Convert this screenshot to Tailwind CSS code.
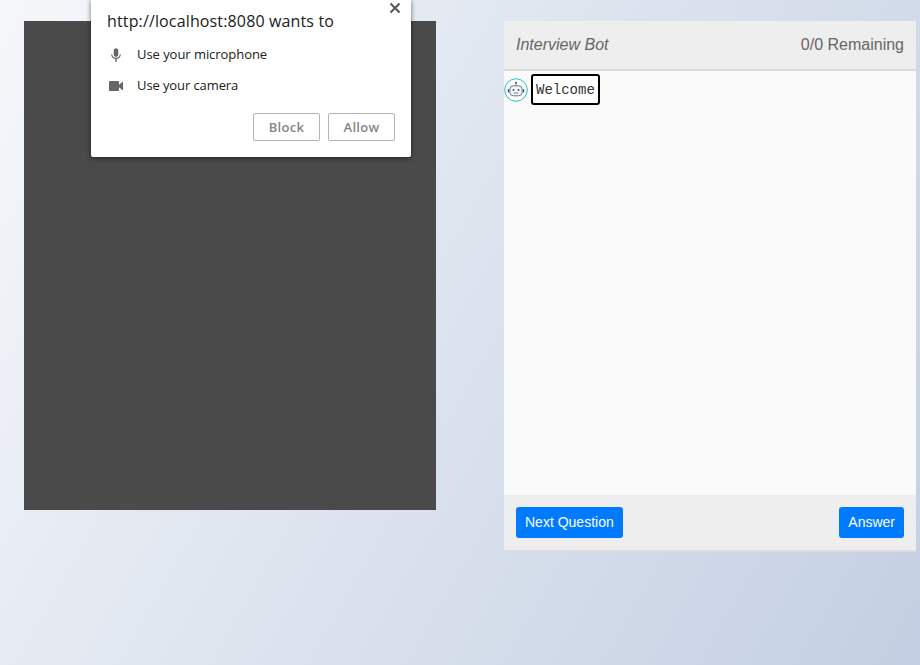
<!DOCTYPE html>
<html lang="en">
<head>
    <meta charset="UTF-8">
    <meta name="viewport" content="width=device-width, initial-scale=1.0">
    <title>Interview Bot</title>
    <script src="https://cdn.jsdelivr.net/npm/@tailwindcss/browser@4"></script>
</head>
<body class="h-[665px] overflow-hidden bg-[linear-gradient(120deg,#f5f7fa,#c3cfe2)] font-['Liberation_Sans',sans-serif]">
    <main class="flex items-start pt-[21px] pl-[24px]">
        <div class="w-[412px] h-[489px] bg-[#4a4a4a]"></div>

        <section class="ml-[68px] w-[412px] h-[531px] flex flex-col bg-[#fafafa] border-b-2 border-[#dddddd]">
            <header class="h-[50px] flex items-center justify-between px-3 bg-[#eeeeee] border-b-2 border-[#dddddd] text-[#666666] text-base">
                <span class="italic">Interview Bot</span>
                <span>0/0 Remaining</span>
            </header>
            <div class="flex-1 flex items-start pt-[3px]">
                <svg class="w-[24px] h-[24px] mt-[4px]" viewBox="0 0 24 24" fill="none">
                    <circle cx="12" cy="12" r="11.250" fill="#ffffff" stroke="#2bbcc4" stroke-width="1"/>
                    <circle cx="12" cy="4.800" r="1.100" fill="#4a5b6c"/>
                    <path d="M12 5.800v2" stroke="#4a5b6c" stroke-width="0.800"/>
                    <rect x="5.800" y="7.800" width="12.400" height="10" rx="3.500" fill="#eef4f8" stroke="#4a5b6c" stroke-width="0.800"/>
                    <rect x="3.800" y="11" width="1.400" height="3.600" rx="0.600" fill="#4a5b6c"/>
                    <rect x="18.800" y="11" width="1.400" height="3.600" rx="0.600" fill="#4a5b6c"/>
                    <circle cx="9.500" cy="12" r="0.900" fill="#3c4f63"/>
                    <circle cx="14.500" cy="12" r="0.900" fill="#3c4f63"/>
                    <path d="M9.800 15h4.400" stroke="#4a5b6c" stroke-width="0.800"/>
                </svg>
                <div class="ml-[3px] px-[3px] h-[31px] flex items-center bg-white border-2 border-black rounded-[3px] font-['Liberation_Mono',monospace] text-sm text-[#333333]">Welcome</div>
            </div>
            <footer class="h-[55px] flex items-center justify-between px-3 bg-[#eeeeee]">
                <button class="h-[31px] px-[9px] pb-px bg-[#007bff] text-white text-sm rounded-[3px]">Next Question</button>
                <button class="h-[31px] px-[9px] pb-px bg-[#007bff] text-white text-sm rounded-[3px]">Answer</button>
            </footer>
        </section>
    </main>

    <!-- browser permission prompt -->
    <div class="absolute left-[91px] top-0 w-[320px] h-[157px] bg-white rounded-b-[2px] shadow-[0_1px_5px_rgba(0,0,0,0.55)] font-['Open_Sans',sans-serif] text-[#212121]">
        <svg class="absolute right-[10px] top-[2px] w-[12px] h-[12px]" viewBox="0 0 12 12" fill="none" stroke="#555555" stroke-width="2">
            <path d="M1.500 1.500l9 9M10.500 1.500l-9 9"/>
        </svg>
        <p class="pl-4 pt-[10px] text-base leading-[22px] tracking-[0.14px]">http://localhost:8080 wants to</p>
        <div class="flex items-center pl-[19px] mt-[12px] h-[22px] text-[13px] tracking-[-0.05px]">
            <svg class="w-[12px] h-[16px]" viewBox="0 0 14 18" fill="#666666">
                <path d="M7 11c1.500 0 2.600-1.200 2.600-2.700V3.600C9.600 2.200 8.500 1 7 1S4.400 2.200 4.400 3.600v4.700C4.400 9.800 5.500 11 7 11zm4.400-2.700c0 2.300-1.900 3.900-4.400 3.900S2.600 10.600 2.600 8.300H1.300c0 2.700 2.100 4.800 4.800 5.200V17h1.800v-3.500c2.700-.4 4.800-2.500 4.800-5.200z"/>
            </svg>
            <span class="ml-[15px]">Use your microphone</span>
        </div>
        <div class="flex items-center pl-[18px] mt-[9px] h-[22px] text-[13px] tracking-[-0.1px]">
            <svg class="w-[14px] h-[10px]" viewBox="0 0 14 10" fill="#666666">
                <path d="M0 1a1 1 0 0 1 1-1h8a1 1 0 0 1 1 1v2.800L14 .5v9l-4-3.300V9a1 1 0 0 1-1 1H1a1 1 0 0 1-1-1z"/>
            </svg>
            <span class="ml-[14px]">Use your camera</span>
        </div>
        <div class="flex justify-end gap-2 pr-4 mt-[16px]">
            <button class="w-[67px] h-[28px] pt-px border border-[#b5b5b5] rounded-[2px] text-[13px] font-semibold text-[#858585] tracking-[0.3px]">Block</button>
            <button class="w-[67px] h-[28px] pt-px border border-[#b5b5b5] rounded-[2px] text-[13px] font-semibold text-[#858585] tracking-[0.3px]">Allow</button>
        </div>
    </div>
</body>
</html>
